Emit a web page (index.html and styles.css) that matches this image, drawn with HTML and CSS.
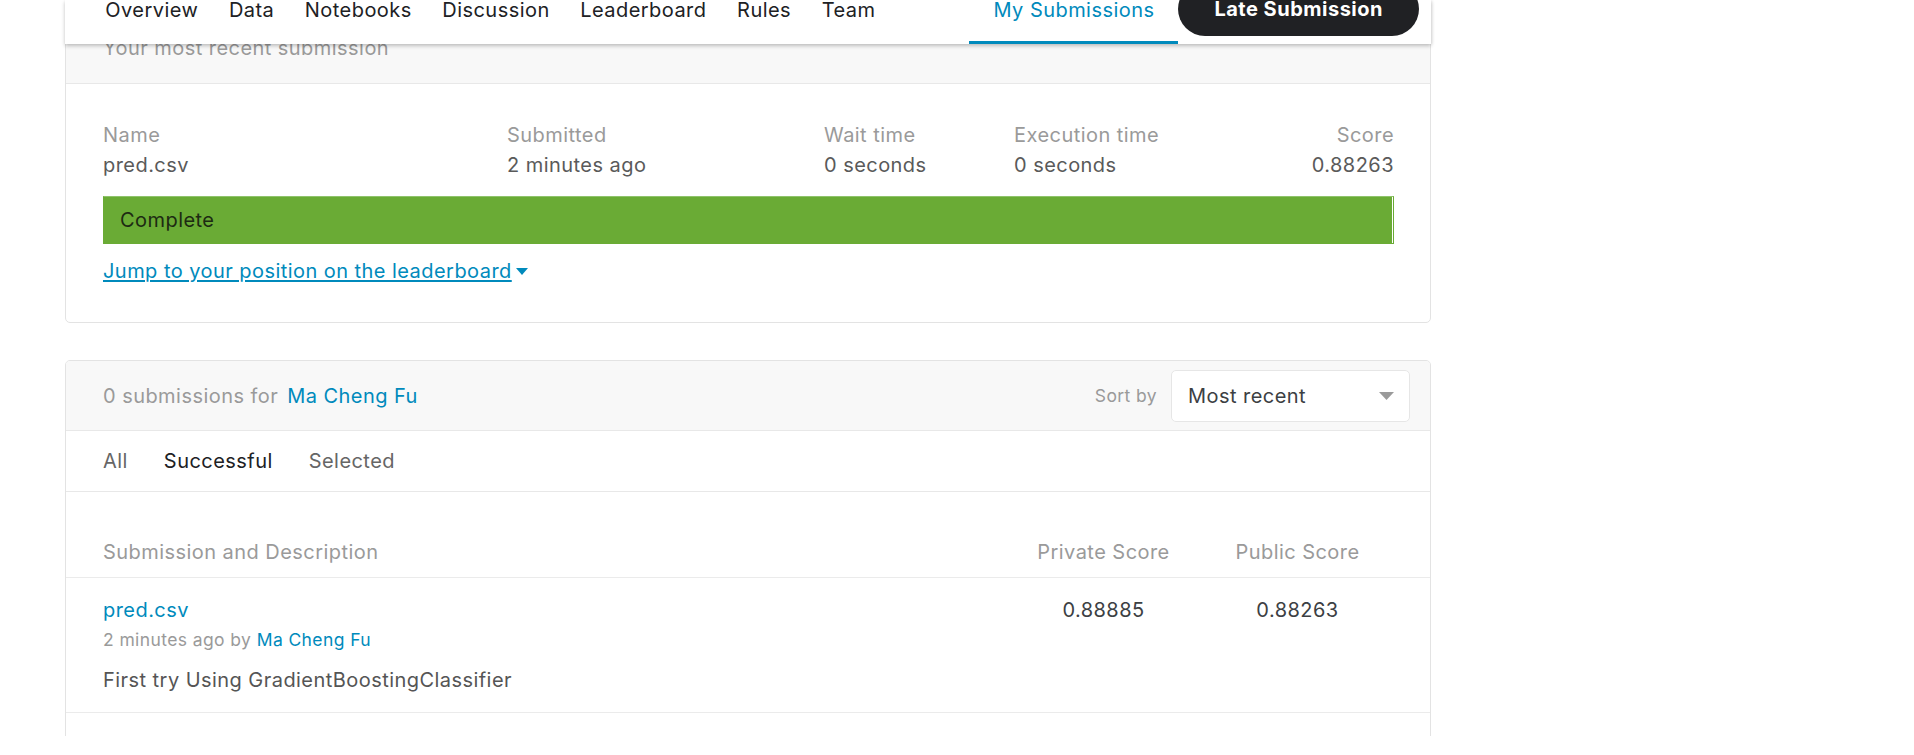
FILE: index.html
```html
<!DOCTYPE html>
<html lang="en">
<head>
<meta charset="utf-8">
<title>My Submissions</title>
<link rel="stylesheet" href="styles.css">
</head>
<body>
<div class="page">
  <nav class="topnav">
    <a class="tab">Overview</a>
    <a class="tab">Data</a>
    <a class="tab">Notebooks</a>
    <a class="tab">Discussion</a>
    <a class="tab">Leaderboard</a>
    <a class="tab">Rules</a>
    <a class="tab">Team</a>
    <div class="spacer"></div>
    <a class="tab tab-active">My Submissions</a>
    <button class="late-btn">Late Submission</button>
  </nav>

  <main class="content">
    <section class="card card-recent">
      <header class="card-head">Your most recent submission</header>
      <div class="recent-body">
        <div class="recent-grid">
          <div class="field"><div class="label">Name</div><div class="value">pred.csv</div></div>
          <div class="field"><div class="label">Submitted</div><div class="value">2 minutes ago</div></div>
          <div class="field"><div class="label">Wait time</div><div class="value">0 seconds</div></div>
          <div class="field"><div class="label">Execution time</div><div class="value">0 seconds</div></div>
          <div class="field field-right"><div class="label">Score</div><div class="value">0.88263</div></div>
        </div>
        <div class="status-bar"><div class="status-fill">Complete</div></div>
        <div class="jump-row">
          <a class="jump-link">Jump to your position on the leaderboard</a><svg class="jump-caret" width="12" height="7" viewBox="0 0 12 7"><polygon points="0,0 12,0 6,7" fill="#008abc"/></svg>
        </div>
      </div>
    </section>

    <section class="card card-list">
      <div class="list-head">
        <span class="count">0 submissions for <a class="owner owner-head">Ma Cheng Fu</a></span>
        <div class="spacer"></div>
        <span class="sort-label">Sort by</span>
        <div class="select">
          <span>Most recent</span>
          <svg width="15" height="8" viewBox="0 0 15 8"><polygon points="0,0 15,0 7.5,8" fill="#9a9a9a"/></svg>
        </div>
      </div>
      <div class="list-tabs">
        <span class="ltab">All</span>
        <span class="ltab ltab-active">Successful</span>
        <span class="ltab">Selected</span>
      </div>
      <div class="table-head">
        <span>Submission and Description</span>
        <span class="num">Private Score</span>
        <span class="num">Public Score</span>
      </div>
      <div class="sub-row">
        <div class="sub-info">
          <a class="sub-name">pred.csv</a>
          <div class="sub-meta">2 minutes ago by <a class="owner">Ma Cheng Fu</a></div>
          <div class="sub-desc">First try Using GradientBoostingClassifier</div>
        </div>
        <span class="num score">0.88885</span>
        <span class="num score">0.88263</span>
      </div>
    </section>
  </main>
</div>
</body>
</html>
```

FILE: styles.css
```css
html, body {
  margin: 0;
  padding: 0;
  background: #ffffff;
}

body {
  font-family: Inter, "Noto Sans", "Liberation Sans", sans-serif;
  font-size: 20px;
  line-height: 30px;
  letter-spacing: 0.45px;
  color: #202124;
}

.page {
  position: relative;
  height: 736px;
  overflow: hidden;
}

/* ---------- top navigation ---------- */
.topnav {
  position: absolute;
  top: 0;
  left: 65px;
  width: 1366px;
  height: 44px;
  box-sizing: border-box;
  padding: 0 12px 0 25px;
  background: #ffffff;
  box-shadow: 0 2px 4px rgba(0, 0, 0, 0.22), 1px 0 3px rgba(0, 0, 0, 0.08);
  display: flex;
  align-items: flex-end;
  z-index: 5;
}

.tab {
  flex: none;
  height: 66px;
  box-sizing: border-box;
  padding: 0 15.3px;
  border-bottom: 3px solid transparent;
  display: flex;
  align-items: center;
  font-size: 20px;
  color: #202124;
  text-decoration: none;
  white-space: nowrap;
}

.tab-active {
  padding: 0 24px 0 25px;
  color: #008abc;
  border-bottom-color: #008abc;
}

.spacer {
  flex: 1;
}

.late-btn {
  flex: none;
  height: 54px;
  margin-bottom: 8px;
  padding: 0 36px;
  border: none;
  border-radius: 27px;
  background: #202124;
  color: #ffffff;
  font-family: Inter, "Noto Sans", sans-serif;
  font-size: 20px;
  font-weight: 700;
  letter-spacing: 0.5px;
  line-height: 30px;
  display: flex;
  align-items: center;
}

/* ---------- content column ---------- */
.content {
  margin-left: 65px;
  width: 1366px;
}

.card {
  border: 1px solid #e3e3e3;
  border-radius: 5px;
  background: #ffffff;
  overflow: hidden;
}

.card-recent {
  margin-top: 12px;
}

.card-head {
  background: #f8f8f8;
  padding: 20px 37px;
  border-bottom: 1px solid #e8e8e8;
  color: #9a9a9a;
}

.recent-body {
  padding: 36px 36px 36px 37px;
}

.recent-grid {
  display: grid;
  grid-template-columns: 404px 317px 190px 1fr auto;
}

.label {
  color: #9a9a9a;
}

.value {
  color: #5a5a5a;
}

.field-right {
  text-align: right;
}

.status-bar {
  margin-top: 16px;
  height: 48px;
  box-sizing: border-box;
  border: 1px solid #6aab35;
  border-top-color: #8fc36b;
  background: #ffffff;
}

.status-fill {
  width: calc(100% - 1px);
  height: 100%;
  box-sizing: border-box;
  padding-left: 16px;
  background: #6aab35;
  display: flex;
  align-items: center;
  color: #1d2a12;
}

.jump-row {
  margin-top: 12px;
  display: flex;
  align-items: center;
}

.jump-link {
  color: #008abc;
  text-decoration: underline;
  text-underline-offset: 2px;
}

.jump-caret {
  margin-left: 4px;
}

/* ---------- submissions list ---------- */
.card-list {
  margin-top: 37px;
  padding-bottom: 60px;
}

.list-head {
  height: 69px;
  box-sizing: content-box;
  padding: 0 20px 0 37px;
  background: #f8f8f8;
  border-bottom: 1px solid #e8e8e8;
  display: flex;
  align-items: center;
  color: #9a9a9a;
}

.owner {
  color: #008abc;
  text-decoration: none;
}

.owner-head {
  margin-left: 3px;
}

.sort-label {
  font-size: 17.5px;
  letter-spacing: 0.4px;
  color: #9a9a9a;
  margin-right: 14px;
}

.select {
  width: 239px;
  height: 52px;
  box-sizing: border-box;
  padding: 0 15px 0 16px;
  border: 1px solid #e6e6e6;
  border-radius: 5px;
  background: #ffffff;
  display: flex;
  align-items: center;
  justify-content: space-between;
  color: #3c4043;
}

.list-tabs {
  height: 60px;
  padding-left: 37px;
  border-bottom: 1px solid #e8e8e8;
  display: flex;
  align-items: center;
  gap: 36px;
  color: #666666;
}

.ltab-active {
  color: #202124;
}

.table-head,
.sub-row {
  display: grid;
  grid-template-columns: 1fr 135px 125px;
  column-gap: 64px;
  border-bottom: 1px solid #ebebeb;
}

.table-head {
  padding: 45px 70px 10px 37px;
  color: #9a9a9a;
}

.num {
  text-align: center;
}

.sub-row {
  padding: 17px 70px 17px 37px;
}

.sub-name {
  display: block;
  color: #008abc;
  text-decoration: none;
}

.sub-meta {
  font-size: 17.5px;
  letter-spacing: 0.4px;
  color: #9a9a9a;
}

.sub-desc {
  margin-top: 10px;
  color: #555555;
}

.score {
  color: #3c4043;
}
```
